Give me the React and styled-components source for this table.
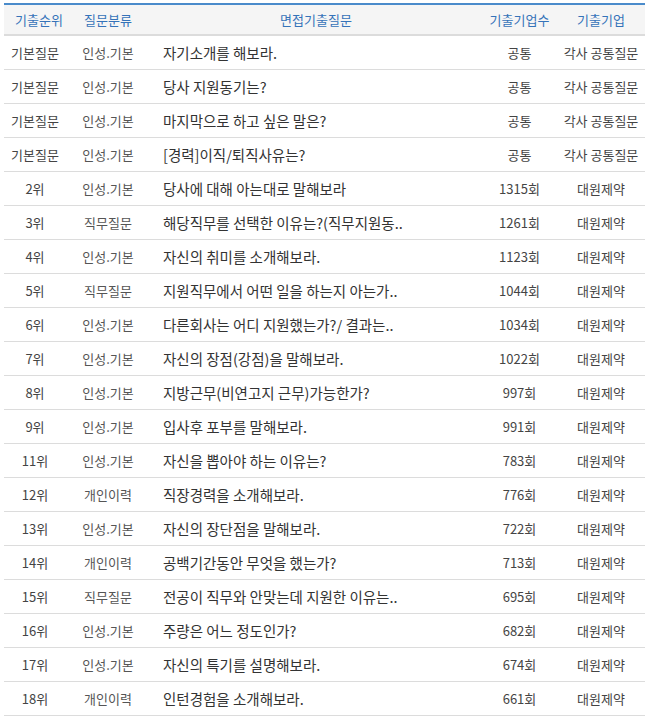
import React from "react";
import styled, { createGlobalStyle } from "styled-components";

const Global = createGlobalStyle`
  html, body { margin: 0; padding: 0; background: #fff; }
  body { font-family: "Noto Sans CJK KR", "Noto Sans", sans-serif; }
`;

const Wrap = styled.div`
  padding: 3px 0 0 4px;
`;

const Table = styled.table`
  width: 641px;
  border-collapse: collapse;
  table-layout: fixed;
  border-top: 2px solid #4a8bcb;
  font-size: 13px;
`;

const Th = styled.th`
  height: 29px;
  padding: 0;
  padding-left: ${(p) => p.$indent || "0"};
  background: #f5f5f5;
  border-bottom: 2px solid #dcdcdc;
  color: #3573b9;
  font-weight: 400;
  text-align: center;
  white-space: nowrap;
`;

const Td = styled.td`
  height: 33px;
  padding: 0;
  padding-left: ${(p) => (p.$align === "left" ? "13px" : "0")};
  border-bottom: 1px solid #dcdcdc;
  text-align: ${(p) => p.$align || "center"};
  font-size: ${(p) => p.$size || "13px"};
  color: ${(p) => p.$color || "#333"};
  white-space: nowrap;
  overflow: visible;
`;

const rows = [
  ["기본질문", "인성.기본", "자기소개를 해보라.", "공통", "각사 공통질문"],
  ["기본질문", "인성.기본", "당사 지원동기는?", "공통", "각사 공통질문"],
  ["기본질문", "인성.기본", "마지막으로 하고 싶은 말은?", "공통", "각사 공통질문"],
  ["기본질문", "인성.기본", "[경력]이직/퇴직사유는?", "공통", "각사 공통질문"],
  ["2위", "인성.기본", "당사에 대해 아는대로 말해보라", "1315회", "대원제약"],
  ["3위", "직무질문", "해당직무를 선택한 이유는?(직무지원동..", "1261회", "대원제약"],
  ["4위", "인성.기본", "자신의 취미를 소개해보라.", "1123회", "대원제약"],
  ["5위", "직무질문", "지원직무에서 어떤 일을 하는지 아는가..", "1044회", "대원제약"],
  ["6위", "인성.기본", "다른회사는 어디 지원했는가?/ 결과는..", "1034회", "대원제약"],
  ["7위", "인성.기본", "자신의 장점(강점)을 말해보라.", "1022회", "대원제약"],
  ["8위", "인성.기본", "지방근무(비연고지 근무)가능한가?", "997회", "대원제약"],
  ["9위", "인성.기본", "입사후 포부를 말해보라.", "991회", "대원제약"],
  ["11위", "인성.기본", "자신을 뽑아야 하는 이유는?", "783회", "대원제약"],
  ["12위", "개인이력", "직장경력을 소개해보라.", "776회", "대원제약"],
  ["13위", "인성.기본", "자신의 장단점을 말해보라.", "722회", "대원제약"],
  ["14위", "개인이력", "공백기간동안 무엇을 했는가?", "713회", "대원제약"],
  ["15위", "직무질문", "전공이 직무와 안맞는데 지원한 이유는..", "695회", "대원제약"],
  ["16위", "인성.기본", "주량은 어느 정도인가?", "682회", "대원제약"],
  ["17위", "인성.기본", "자신의 특기를 설명해보라.", "674회", "대원제약"],
  ["18위", "개인이력", "인턴경험을 소개해보라.", "661회", "대원제약"],
];

export default function App() {
  return (
    <Wrap>
      <Global />
      <Table>
        <colgroup>
          <col style={{ width: 62 }} />
          <col style={{ width: 84 }} />
          <col style={{ width: 332 }} />
          <col style={{ width: 75 }} />
          <col style={{ width: 88 }} />
        </colgroup>
        <thead>
          <tr>
            <Th $indent="8px">기출순위</Th>
            <Th>질문분류</Th>
            <Th>면접기출질문</Th>
            <Th>기출기업수</Th>
            <Th>기출기업</Th>
          </tr>
        </thead>
        <tbody>
          {rows.map((r, i) => (
            <tr key={i}>
              <Td $color="#444">{r[0]}</Td>
              <Td $color="#555">{r[1]}</Td>
              <Td $align="left" $size="14.5px" $color="#333">{r[2]}</Td>
              <Td $color="#444">{r[3]}</Td>
              <Td $color="#444">{r[4]}</Td>
            </tr>
          ))}
        </tbody>
      </Table>
    </Wrap>
  );
}
